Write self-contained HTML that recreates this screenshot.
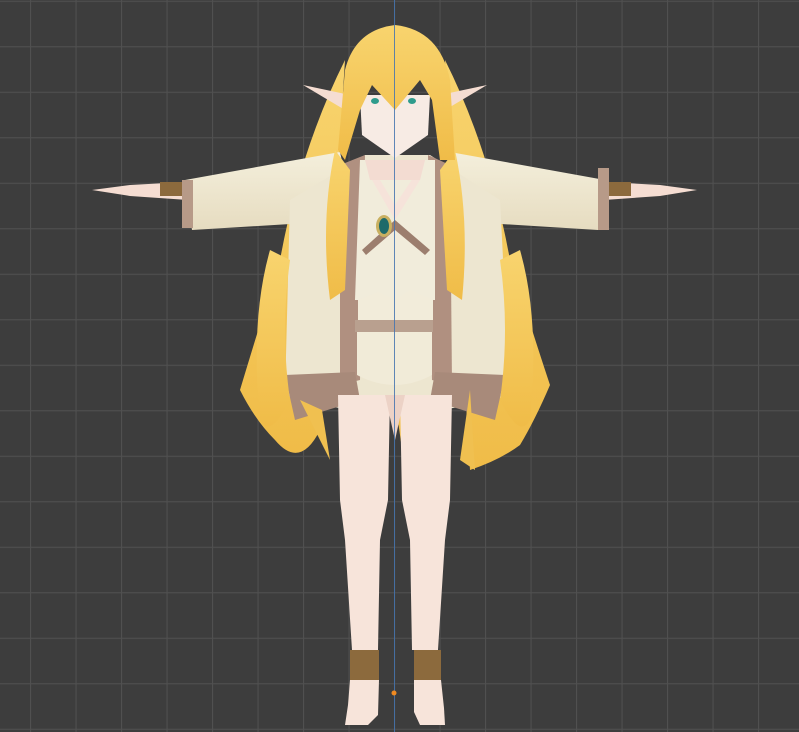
<!DOCTYPE html>
<html><head><style>
html,body{margin:0;padding:0;background:#3d3d3d;width:799px;height:732px;overflow:hidden}
</style></head><body>
<svg width="799" height="732" viewBox="0 0 799 732" xmlns="http://www.w3.org/2000/svg">
<defs>
<pattern id="g" x="30" y="0.7" width="45.5" height="45.5" patternUnits="userSpaceOnUse">
<path d="M0.5 0V45.5M0 0.5H45.5" stroke="#505050" stroke-width="1.2" fill="none"/>
</pattern>
<linearGradient id="hair" x1="0" y1="0" x2="0" y2="1"><stop offset="0" stop-color="#f8d46e"/><stop offset="1" stop-color="#f0bc48"/></linearGradient>
<linearGradient id="sleeve" x1="0" y1="0" x2="0" y2="1"><stop offset="0" stop-color="#f4efdc"/><stop offset="1" stop-color="#e6dcc0"/></linearGradient>
</defs>
<rect width="799" height="732" fill="#3d3d3d"/>
<rect width="799" height="732" fill="url(#g)"/>
<!-- back hair -->
<path d="M345 60 Q300 150 280 260 Q255 340 240 390 Q255 420 275 440 Q300 470 320 430 L330 300 Z" fill="url(#hair)"/>
<path d="M445 60 Q490 150 510 260 Q535 340 550 385 Q535 420 520 445 Q500 460 470 470 L460 300 Z" fill="url(#hair)"/>
<!-- arms -->
<path d="M92 190 L130 185 L185 182 L188 200 L130 196 Z" fill="#f5ddd2"/>
<path d="M697 190 L660 185 L607 182 L604 200 L660 196 Z" fill="#f5ddd2"/>
<path d="M185 180 L340 152 L355 220 L192 230 Z" fill="url(#sleeve)"/>
<path d="M605 180 L450 152 L438 220 L598 230 Z" fill="url(#sleeve)"/>
<rect x="182" y="180" width="11" height="48" fill="#b79a88"/>
<rect x="598" y="168" width="11" height="62" fill="#b79a88"/>
<rect x="160" y="182" width="22" height="14" fill="#8c6a3d"/>
<rect x="609" y="182" width="22" height="14" fill="#8c6a3d"/>
<!-- coat -->
<path d="M290 200 L365 155 L430 155 L500 200 L510 395 Q395 430 285 395 Z" fill="#ede6d0"/>
<path d="M340 165 L365 155 L360 380 L340 385 Z" fill="#b09080"/>
<path d="M450 165 L428 155 L432 380 L452 385 Z" fill="#b09080"/>
<path d="M360 160 L435 160 L435 300 L355 300 Z" fill="#f1ecdb"/>
<path d="M368 160 L395 205 L425 160 L420 180 L395 220 L372 180Z" fill="#f6e3da"/>
<path d="M362 250 L395 220 L430 250 L425 255 L395 230 L366 255Z" fill="#9c7e6e"/>
<ellipse cx="384" cy="226" rx="8" ry="11" fill="#c9b060"/>
<ellipse cx="384" cy="226" rx="5" ry="8" fill="#1e6a6a"/>
<rect x="355" y="320" width="78" height="12" fill="#b9a08f"/>
<path d="M358 300 L378 292 L395 300 L410 290 L433 300 L433 320 L358 320Z" fill="#f2ecda"/>
<path d="M357 332 L432 332 L432 375 Q395 395 357 375Z" fill="#f1ebd8"/>
<path d="M285 375 L355 372 L360 400 L295 420 Z" fill="#a88a7a"/>
<path d="M505 375 L435 372 L430 400 L495 420 Z" fill="#a88a7a"/>
<!-- front hair strands -->
<path d="M335 150 Q320 220 330 300 L345 290 L350 170 Z" fill="url(#hair)"/>
<path d="M455 150 Q470 220 462 300 L447 290 L440 170 Z" fill="url(#hair)"/>
<path d="M270 250 Q250 320 260 420 Q270 440 290 400 Q280 330 290 260 Z" fill="url(#hair)"/>
<path d="M520 250 Q540 320 530 420 Q520 440 500 400 Q510 330 500 260 Z" fill="url(#hair)"/>
<path d="M300 400 Q320 440 330 460 L322 410 Z" fill="#f0c050"/>
<path d="M395 400 L420 470 L405 470 Z" fill="#f0c050"/>
<path d="M470 390 L475 470 L460 460 Z" fill="#f0c050"/>
<!-- legs -->
<path d="M338 395 L390 395 L388 500 L380 540 L378 650 L352 650 L345 540 L340 500 Z" fill="#f7e4da"/>
<path d="M452 395 L400 395 L402 500 L410 540 L412 650 L438 650 L445 540 L450 500 Z" fill="#f7e4da"/>
<path d="M385 395 L405 395 L395 440Z" fill="#ecd2c6"/>
<rect x="350" y="650" width="29" height="30" fill="#8c6a3d"/>
<rect x="414" y="650" width="27" height="30" fill="#8c6a3d"/>
<path d="M350 680 L379 680 L378 715 L368 725 L345 725 L348 705 Z" fill="#f7e4da"/>
<path d="M414 680 L441 680 L444 708 L445 725 L420 725 L414 712 Z" fill="#f7e4da"/>
<!-- head -->
<path d="M303 85 L350 95 L345 110 Z" fill="#f5ddd2"/>
<path d="M487 85 L440 95 L445 110 Z" fill="#f5ddd2"/>
<path d="M360 95 L430 95 L428 135 L395 158 L362 135 Z" fill="#f7ebe4"/>
<path d="M365 160 L425 160 L420 180 L370 180Z" fill="#f3dcd2"/>
<path d="M395 25 Q440 30 450 80 L455 160 L440 160 L432 100 L420 80 L395 110 L372 85 L360 110 L345 160 L338 150 L345 70 Q355 30 395 25Z" fill="url(#hair)"/>
<ellipse cx="375" cy="101" rx="4" ry="3" fill="#2f9c8c"/>
<ellipse cx="412" cy="101" rx="4" ry="3" fill="#2f9c8c"/>
<!-- axis -->
<line x1="394.5" y1="0" x2="394.5" y2="732" stroke="#4474b0" stroke-width="1" opacity="0.85"/>
<circle cx="394" cy="693" r="2.5" fill="#f08a20"/>
</svg>
</body></html>
